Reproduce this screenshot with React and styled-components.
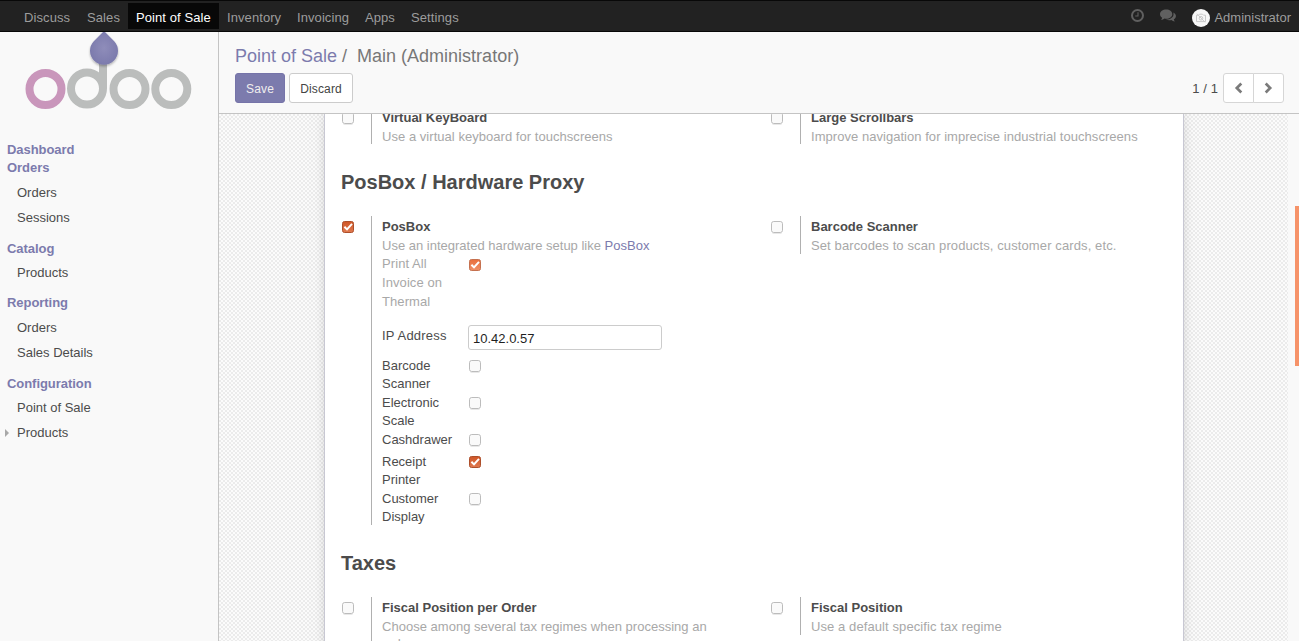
import React from "react";
import styled, { createGlobalStyle, css } from "styled-components";

const Global = createGlobalStyle`
  *, *::before, *::after { box-sizing: border-box; }
  body {
    margin: 0;
    overflow: hidden;
    background: #f9f9f9;
    color: #4c4c4c;
    font: 13px/18.57px "Liberation Sans", Arial, sans-serif;
  }
`;

const Screen = styled.div`
  display: flex;
  flex-direction: column;
  width: 100%;
  height: 641px;
  overflow: hidden;
`;

const Navbar = styled.nav`
  display: flex;
  justify-content: space-between;
  flex: none;
  height: 32px;
  padding: 2px 8px 2px 16px;
  background: #222;
  border-top: 1px solid #080808;
  border-bottom: 1px solid #080808;
`;

const NavGroup = styled.div`
  display: flex;
  align-items: flex-start;
`;

const NavItem = styled.a`
  width: ${(p) => p.$width}px;
  height: 26px;
  padding: 0 0 0 8px;
  line-height: 29px;
  white-space: nowrap;
  letter-spacing: ${(p) => p.$spacing || 0}px;
  color: ${(p) => (p.$active ? "#fff" : "#9d9d9d")};
  background: ${(p) => (p.$active ? "#080808" : "transparent")};
`;

const TrayIcon = styled.span`
  display: flex;
  width: 16px;
  margin: 6px ${(p) => p.$gap}px 0 0;
  color: #606060;
`;

const Avatar = styled.span`
  display: flex;
  margin: 6px 4px 0 0;
`;

const UserName = styled.span`
  line-height: 29px;
  color: #9d9d9d;
`;

const Body = styled.div`
  display: flex;
  flex: 1;
  min-height: 0;
`;

const Sidebar = styled.aside`
  flex: none;
  width: 219px;
  border-right: 1px solid #c4c4c4;
  background: #f9f9f9;
`;

const Logo = styled.svg`
  display: block;
`;

const MenuSection = styled.section`
  margin-bottom: ${(p) => p.$after}px;
`;

const MenuTitle = styled.div`
  height: 18px;
  padding-left: 7px;
  margin-bottom: ${(p) => p.$after || 0}px;
  line-height: 18px;
  font-weight: bold;
  letter-spacing: -0.05px;
  color: #7c7bad;
`;

const MenuItem = styled.a`
  display: flex;
  align-items: center;
  height: 25px;
  padding-left: ${(p) => (p.$folded ? 5 : 17)}px;
`;

const Caret = styled.span`
  margin: 0 8px 2px 0;
  border-left: 4px solid #a8a8a8;
  border-top: 4px solid transparent;
  border-bottom: 4px solid transparent;
`;

const Main = styled.main`
  display: flex;
  flex-direction: column;
  flex: 1;
  min-width: 0;
`;

const ControlPanel = styled.header`
  display: flex;
  flex-direction: column;
  flex: none;
  height: 82px;
  padding: 12px 15px 0 16px;
  border-bottom: 1px solid #c4c4c4;
  background: #f9f9f9;
`;

const Breadcrumb = styled.div`
  height: 29px;
  line-height: 24px;
  font-size: 18px;
  color: #777;
  white-space: pre;
`;

const Crumb = styled.a`
  color: #7c7bad;
`;

const ControlRow = styled.div`
  display: flex;
  justify-content: space-between;
`;

const Actions = styled.div`
  display: flex;
  gap: 4px;
`;

const Button = styled.button`
  width: ${(p) => p.$width}px;
  height: 30px;
  padding: 2px 0 0;
  font: 12px/26px "Liberation Sans", Arial, sans-serif;
  letter-spacing: 0.15px;
  border-radius: 3px;
  ${(p) =>
    p.$primary
      ? css`color: #f0eeee; background: #7c7bad; border: 1px solid #7674a9;`
      : css`color: #444; background: #fff; border: 1px solid #ccc;`}
`;

const Pager = styled.div`
  display: flex;
  align-items: center;
`;

const PagerValue = styled.span`
  margin: 2px 5px 0 0;
  letter-spacing: 0.1px;
`;

const PagerButton = styled.button`
  display: flex;
  align-items: center;
  justify-content: center;
  width: 31px;
  height: 30px;
  padding: 0 0 1px;
  color: #7b7b7b;
  background: #fff;
  border: 1px solid #d6d6d6;
  border-radius: 3px 0 0 3px;
  & + & {
    margin-left: -1px;
    border-radius: 0 3px 3px 0;
  }
`;

const Scroller = styled.div`
  display: flex;
  flex: 1;
  min-height: 0;
  overflow: hidden;
`;

const Canvas = styled.div`
  flex: 1;
  display: flex;
  padding-left: 105px;
  background: repeating-conic-gradient(#ebebeb 0 25%, #fbfbfb 0 50%) 0 0 / 4px 4px;
`;

const Sheet = styled.div`
  flex: none;
  width: 860px;
  height: 620px;
  margin-top: -21px;
  padding: 12px 16px 0;
  background: #fff;
  border: 1px solid #c8c8d3;
  box-shadow: 0 5px 20px -15px #000;
`;

const ScrollTrack = styled.div`
  display: flex;
  justify-content: flex-end;
  width: 11px;
  padding-top: 92px;
  background: #f9f9f9;
`;

const ScrollThumb = styled.div`
  width: 4px;
  height: 160px;
  background: #f69369;
`;

const Heading = styled.h2`
  height: 24px;
  margin: 26px 0 22px;
  font-size: 20px;
  line-height: 24px;
`;

const SettingsRow = styled.div`
  display: grid;
  grid-template-columns: 429px 1fr;
  align-items: start;
`;

const Setting = styled.div`
  display: flex;
`;

const CheckCell = styled.div`
  flex: none;
  width: 30px;
  padding: ${(p) => 4 + p.$shift}px 0 0;
`;

const SettingPane = styled.div`
  width: 360px;
  height: ${(p) => p.$height || 38}px;
  padding: ${(p) => 1 + p.$shift}px 0 0 10px;
  border-left: 1px solid #b0b0b0;
`;

const SettingTitle = styled.div`
  font-weight: bold;
  line-height: 19px;
`;

const Hint = styled.div`
  padding-top: ${(p) => (p.$tight ? 1 : 0)}px;
  line-height: ${(p) => (p.$tight ? 17 : 19)}px;
  color: #a8a8a8;
  letter-spacing: ${(p) => p.$spacing || 0}px;
`;

const Field = styled.div`
  display: flex;
  height: ${(p) => p.$height}px;
`;

const FieldLabel = styled.label`
  width: 86px;
  padding-top: ${(p) => p.$top || 0}px;
  line-height: ${(p) => (p.$muted ? 18.8 : 18.2)}px;
  letter-spacing: ${(p) => p.$spacing || 0}px;
  color: ${(p) => (p.$muted ? "#a8a8a8" : "#4c4c4c")};
  white-space: pre-line;
`;

const FieldValue = styled.div`
  padding-top: ${(p) => p.$top}px;
`;

const Input = styled.input`
  display: block;
  width: 194px;
  height: 25px;
  padding: 2px 4px 0;
  font: 13px "Liberation Sans", Arial, sans-serif;
  color: #1f1f1f;
  border: 1px solid #ccc;
  border-radius: 3px;
`;

const Drawing = styled.svg`
  display: block;
  overflow: visible;
`;

function Check({ on, soft }) {
  return (
    <Drawing width="14" height="14" viewBox="0 0 14 14">
      <defs>
        <linearGradient id="checkOn" x1="0" y1="0" x2="0" y2="1">
          <stop offset="0" stopColor="#cf5526" />
          <stop offset="1" stopColor="#e07a50" />
        </linearGradient>
        <linearGradient id="checkSoft" x1="0" y1="0" x2="0" y2="1">
          <stop offset="0" stopColor="#e96f3d" />
          <stop offset="1" stopColor="#ef9068" />
        </linearGradient>
      </defs>
      {on ? (
        <>
          <rect x="1.5" y="1.5" width="11" height="11" rx="2" fill={soft ? "url(#checkSoft)" : "url(#checkOn)"} stroke={soft ? "#c5714f" : "#ad4f2b"} />
          <path d="M3.4 6.8 L6 9.4 L11 3.8" fill="none" stroke="#fff" strokeWidth="2" />
        </>
      ) : (
        <>
          <path d="M2.5 13.4H11.5" stroke="#e6e6e6" />
          <rect x="1.5" y="1.5" width="11" height="11" rx="2.2" fill="#fafafa" stroke="#bcbcbc" />
        </>
      )}
    </Drawing>
  );
}

function Clock() {
  return (
    <Drawing width="13" height="13" viewBox="0 0 13 13" fill="none" stroke="currentColor">
      <circle cx="6.5" cy="6.5" r="5.5" strokeWidth="2" />
      <path d="M7 3.2V7H4.2" strokeWidth="1.1" />
    </Drawing>
  );
}

function Comments() {
  return (
    <Drawing width="16" height="14" viewBox="0 0 16 14" fill="currentColor">
      <path d="M6.2 0.6C9.6 0.6 12.3 2.6 12.3 5.2S9.6 9.7 6.2 9.7C5.6 9.7 5.1 9.65 4.6 9.5C3.6 10.3 2.4 10.8 1 10.9C1.6 10.3 2 9.6 2.1 8.7C0.8 7.8 0 6.6 0 5.2C0 2.6 2.8 0.6 6.2 0.6Z" />
      <path d="M13.3 3.4C14.9 4.2 15.9 5.5 15.9 6.9C15.9 8.3 15.1 9.5 13.8 10.3C13.9 11.3 14.3 11.9 15 12.6C13.6 12.5 12.3 12 11.3 11.1C9.3 11.5 7.2 11.2 5.8 10.5C9.9 10.7 13.5 8.5 13.5 5.2C13.5 4.6 13.5 4 13.3 3.4Z" />
    </Drawing>
  );
}

function Chevron({ flip }) {
  return (
    <Drawing width="9" height="12" viewBox="0 0 9 12" fill="none" stroke="currentColor" strokeWidth="2.7">
      <path d={flip ? "M1.7 1.5L6.2 6L1.7 10.5" : "M7.3 1.5L2.8 6L7.3 10.5"} />
    </Drawing>
  );
}

function Option({ title, hint, on, height, spacing, tight, shift = 0, children }) {
  return (
    <Setting>
      <CheckCell $shift={shift}><Check on={on} /></CheckCell>
      <SettingPane $height={height} $shift={shift}>
        <SettingTitle>{title}</SettingTitle>
        <Hint $spacing={spacing} $tight={tight}>{hint}</Hint>
        {children}
      </SettingPane>
    </Setting>
  );
}

const apps = [
  ["Discuss", 63, 0.1],
  ["Sales", 49, 0.1],
  ["Point of Sale", 91, 0.08],
  ["Inventory", 70, 0.08],
  ["Invoicing", 68, 0.08],
  ["Apps", 46, 0],
  ["Settings", 64, 0.1],
];

const devices = [
  ["Barcode\nScanner", 37, false],
  ["Electronic\nScale", 37, false],
  ["Cashdrawer", 22, false],
  ["Receipt\nPrinter", 37, true],
  ["Customer\nDisplay", 37, false],
];

export default function App() {
  return (
    <Screen>
      <Global />
      <Navbar>
        <NavGroup>
          {apps.map(([name, width, spacing]) => (
            <NavItem key={name} $width={width} $spacing={spacing} $active={name === "Point of Sale"}>{name}</NavItem>
          ))}
        </NavGroup>
        <NavGroup>
          <TrayIcon $gap={13}><Clock /></TrayIcon>
          <TrayIcon $gap={16}><Comments /></TrayIcon>
          <Avatar>
            <svg width="18" height="18" viewBox="0 0 18 18">
              <circle cx="9" cy="9" r="9" fill="#f7f7f7" />
              <path d="M4.5 6.2h2l1-1h3l1 1h2v6.4h-9z M5 4.8l8 8.4" fill="none" stroke="#c9c9c9" />
              <circle cx="9" cy="9.3" r="1.8" fill="none" stroke="#c9c9c9" />
            </svg>
          </Avatar>
          <UserName>Administrator</UserName>
        </NavGroup>
      </Navbar>
      <Body>
        <Sidebar>
          <Logo width="218" height="109" viewBox="0 32 218 109">
            <defs>
              <radialGradient id="drop">
                <stop offset="0" stopColor="#8f8dba" />
                <stop offset="1" stopColor="#7c7bad" />
              </radialGradient>
              <filter id="dropShadow" x="-30%" y="-30%" width="160%" height="170%">
                <feDropShadow dx="0" dy="1.5" stdDeviation="1.2" floodColor="#000" floodOpacity="0.3" />
              </filter>
            </defs>
            <g fill="none" strokeWidth="8" stroke="#bbbdbc">
              <circle cx="45.5" cy="89" r="16" stroke="#c996bb" />
              <circle cx="87" cy="88.5" r="16" />
              <path d="M103 60V88.5" />
              <circle cx="129.5" cy="89" r="16" />
              <circle cx="171.3" cy="89" r="16" />
            </g>
            <path d="M104 31L114.2 41.2A14 14 0 1 1 93.8 41.2Z" fill="url(#drop)" filter="url(#dropShadow)" />
          </Logo>
          <MenuSection $after={9}>
            <MenuTitle>Dashboard</MenuTitle>
            <MenuTitle $after={4}>Orders</MenuTitle>
            <MenuItem>Orders</MenuItem>
            <MenuItem>Sessions</MenuItem>
          </MenuSection>
          <MenuSection $after={8}>
            <MenuTitle $after={3}>Catalog</MenuTitle>
            <MenuItem>Products</MenuItem>
          </MenuSection>
          <MenuSection $after={9}>
            <MenuTitle $after={4}>Reporting</MenuTitle>
            <MenuItem>Orders</MenuItem>
            <MenuItem>Sales Details</MenuItem>
          </MenuSection>
          <MenuSection $after={0}>
            <MenuTitle $after={3}>Configuration</MenuTitle>
            <MenuItem>Point of Sale</MenuItem>
            <MenuItem $folded><Caret />Products</MenuItem>
          </MenuSection>
        </Sidebar>
        <Main>
          <ControlPanel>
            <Breadcrumb><Crumb>Point of Sale</Crumb>{" /  "}Main (Administrator)</Breadcrumb>
            <ControlRow>
              <Actions>
                <Button $primary $width={50}>Save</Button>
                <Button $width={64}>Discard</Button>
              </Actions>
              <Pager>
                <PagerValue>1 / 1</PagerValue>
                <PagerButton aria-label="Previous"><Chevron /></PagerButton>
                <PagerButton aria-label="Next"><Chevron flip /></PagerButton>
              </Pager>
            </ControlRow>
          </ControlPanel>
          <Scroller>
            <Canvas>
              <Sheet>
                <SettingsRow>
                  <Option shift={1} spacing={0.04} title="Virtual KeyBoard" hint="Use a virtual keyboard for touchscreens" />
                  <Option shift={1} spacing={0.04} title="Large Scrollbars" hint="Improve navigation for imprecise industrial touchscreens" />
                </SettingsRow>
                <Heading>PosBox / Hardware Proxy</Heading>
                <SettingsRow>
                  <Option on title="PosBox" height={309} hint={<>Use an integrated hardware setup like <Crumb>PosBox</Crumb></>}>
                    <Field $height={70}>
                      <FieldLabel $muted $spacing={0.08}>{"Print All\nInvoice on\nThermal"}</FieldLabel>
                      <FieldValue $top={3}><Check on soft /></FieldValue>
                    </Field>
                    <Field $height={31}>
                      <FieldLabel $top={2} $spacing={0.2}>IP Address</FieldLabel>
                      <FieldValue $top={0}><Input defaultValue="10.42.0.57" /></FieldValue>
                    </Field>
                    {devices.map(([label, height, on]) => (
                      <Field key={label} $height={height}>
                        <FieldLabel $top={1}>{label}</FieldLabel>
                        <FieldValue $top={3}><Check on={on} /></FieldValue>
                      </Field>
                    ))}
                  </Option>
                  <Option spacing={0.11} title="Barcode Scanner" hint="Set barcodes to scan products, customer cards, etc." />
                </SettingsRow>
                <Heading>Taxes</Heading>
                <SettingsRow>
                  <Option tight height={57} spacing={0.02} title="Fiscal Position per Order" hint="Choose among several tax regimes when processing an order" />
                  <Option spacing={0.09} title="Fiscal Position" hint="Use a default specific tax regime" />
                </SettingsRow>
              </Sheet>
            </Canvas>
            <ScrollTrack><ScrollThumb /></ScrollTrack>
          </Scroller>
        </Main>
      </Body>
    </Screen>
  );
}
